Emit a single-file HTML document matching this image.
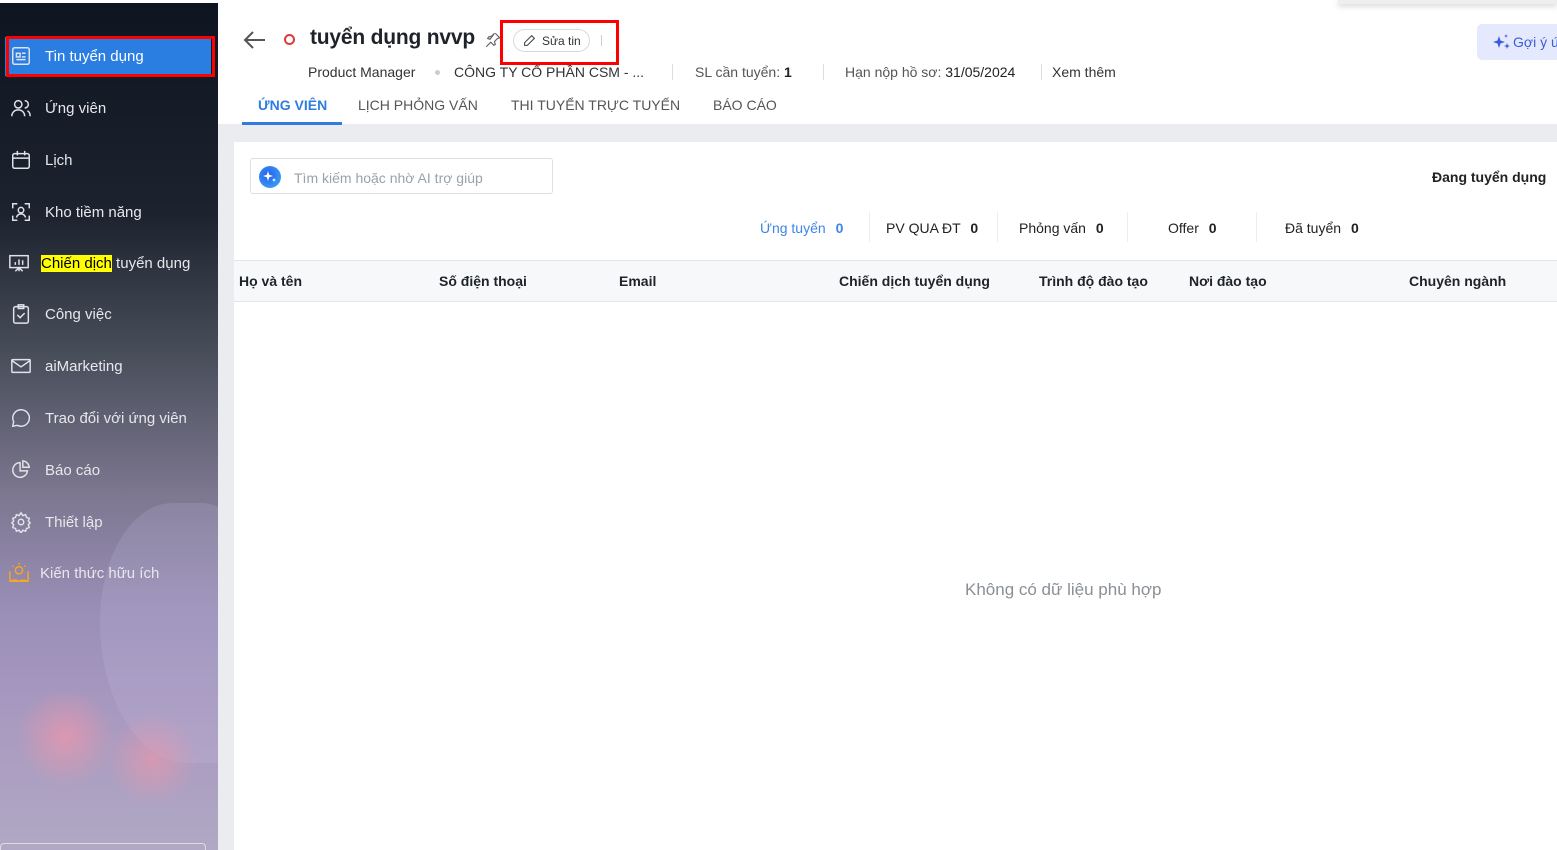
<!DOCTYPE html>
<html><head><meta charset="utf-8"><style>
*{margin:0;padding:0;box-sizing:border-box}
body{width:1557px;height:850px;overflow:hidden;font-family:"Liberation Sans",sans-serif;background:#fff;position:relative;color:#1f2329}
.sb{position:absolute;left:0;top:3px;width:218px;height:847px;background:linear-gradient(180deg,#0e1520 0%,#1c232e 25%,#4a4f5c 42%,#7d7790 58%,#9a8fb8 72%,#a99ac0 85%,#b0a8c4 100%);overflow:hidden}
.horse{position:absolute;left:100px;top:500px;width:160px;height:260px;border-radius:50% 40% 20% 60%;background:rgba(200,195,230,.18)}
.mi{position:absolute;left:10px;display:flex;align-items:center;font-size:15px;color:#e6e8ec;height:24px}
.mi svg{width:22px;height:22px;margin-right:13px;fill:none;stroke:#dfe3ea;stroke-width:1.6}
.act{position:absolute;left:5px;top:34px;width:206px;height:39px;background:#2a7de1}
.redbox{position:absolute;border:3px solid #f00}
.hdr{position:absolute;left:218px;top:0;right:0;height:124px;background:#fff}
.gray{position:absolute;left:218px;top:124px;right:0;height:726px;background:#ebecf0}
.panel{position:absolute;left:234px;top:142px;right:0;bottom:0;background:#fff}
.t{position:absolute;white-space:nowrap}
</style></head><body>
<div class="sb">
<div class="horse"></div>
<div style="position:absolute;left:0;top:690px;width:218px;height:110px;background:radial-gradient(circle at 30% 40%,rgba(240,150,170,.7) 0,rgba(240,150,170,0) 30%),radial-gradient(circle at 70% 60%,rgba(240,150,170,.6) 0,rgba(240,150,170,0) 28%)"></div>
<div class="act"></div>
<div class="mi" style="top:41px;color:#fff"><svg viewBox="0 0 24 24"><rect x="3" y="3" width="18" height="18" rx="2"/><rect x="7" y="9" width="4" height="4"/><path d="M13 9h4M13 13h4M7 16h10"/></svg>Tin tuyển dụng</div>
<div class="mi" style="top:93px"><svg viewBox="0 0 24 24"><circle cx="9" cy="8" r="4"/><path d="M2 21c0-4 3-7 7-7s7 3 7 7M16 4a4 4 0 010 8M19 15c2 1 3 3 3 6"/></svg>Ứng viên</div>
<div class="mi" style="top:145px"><svg viewBox="0 0 24 24"><rect x="3" y="5" width="18" height="16" rx="2"/><path d="M3 10h18M8 2v5M16 2v5"/></svg>Lịch</div>
<div class="mi" style="top:197px"><svg viewBox="0 0 24 24"><path d="M3 8V3h5M16 3h5v5M21 16v5h-5M8 21H3v-5"/><circle cx="12" cy="10" r="3"/><path d="M7 18c1-3 3-4 5-4s4 1 5 4"/></svg>Kho tiềm năng</div>
<div class="mi" style="top:248px;left:8px"><svg viewBox="0 0 24 24"><rect x="2" y="4" width="20" height="13"/><path d="M8 14v-3M12 14V8M16 14v-5M12 17v4M8 21l4-4 4 4"/></svg><span style="background:#ff0;color:#000;margin-left:-2px">Chiến dịch</span>&nbsp;tuyển dụng</div>
<div class="mi" style="top:299px"><svg viewBox="0 0 24 24"><rect x="4" y="4" width="16" height="18" rx="2"/><rect x="9" y="2" width="6" height="4"/><path d="M8 13l3 3 5-5"/></svg>Công việc</div>
<div class="mi" style="top:351px"><svg viewBox="0 0 24 24"><rect x="2" y="5" width="20" height="14" rx="1"/><path d="M2 6l10 7 10-7"/></svg>aiMarketing</div>
<div class="mi" style="top:403px"><svg viewBox="0 0 24 24"><path d="M12 3a9 9 0 00-8 13l-1 5 5-1a9 9 0 104-17z"/><path d="M8 12h.1M12 12h.1M16 12h.1"/></svg>Trao đổi với ứng viên</div>
<div class="mi" style="top:455px"><svg viewBox="0 0 24 24"><path d="M11 4a8 8 0 108 9h-8z"/><path d="M14 2a8 8 0 017 7h-7z"/></svg>Báo cáo</div>
<div class="mi" style="top:507px"><svg viewBox="0 0 24 24"><circle cx="12" cy="12" r="3"/><path d="M12 2l2 3 3-1 1 3 3 1-1 3 2 2-2 2 1 3-3 1-1 3-3-1-2 3-2-3-3 1-1-3-3-1 1-3-2-2 2-2-1-3 3-1 1-3 3 1z"/></svg>Thiết lập</div>
<div class="mi" style="top:558px;left:8px"><svg viewBox="0 0 24 24" style="stroke:#f5a623;margin-right:10px"><path d="M2 10v11h20V10M2 21c4-2 7-2 10 0 3-2 6-2 10 0"/><circle cx="12" cy="9" r="4"/><path d="M12 1v2M5 4l1 1M19 4l-1 1"/></svg>Kiến thức hữu ích</div>
<div style="position:absolute;left:0;top:840px;width:206px;height:10px;border:1px solid #ddd;border-radius:4px"></div>
</div>
<div class="redbox" style="left:6px;top:36px;width:209px;height:41px"></div>
<div class="hdr">
<div style="position:absolute;left:1120px;top:0;right:0;height:4px;box-shadow:0 2px 6px rgba(0,0,0,.2);background:#eee"></div>
</div>
<svg class="t" style="left:242px;top:29px" width="26" height="22" viewBox="0 0 26 22"><path d="M23 11H3M11 3l-8 8 8 8" fill="none" stroke="#555" stroke-width="2"/></svg>
<div class="t" style="left:284px;top:34px;width:11px;height:11px;border:2px solid #e03a3a;border-radius:50%"></div>
<div class="t" style="left:310px;top:26px;font-size:21px;font-weight:bold;color:#1f2329;letter-spacing:-0.2px">tuyển dụng nvvp</div>
<svg class="t" style="left:484px;top:31px" width="18" height="18" viewBox="0 0 24 24"><path d="M15 3l6 6-3 1-4 4 1 4-2 1-4-4-6 6M8 11l-3-1 1-2 4-1 4-4z" fill="none" stroke="#666" stroke-width="1.6"/></svg>
<div class="t" style="left:513px;top:29px;width:77px;height:23px;border:1px solid #d8dadf;border-radius:12px;font-size:12px;padding:4px 0 0 28px;color:#333">Sửa tin</div>
<svg class="t" style="left:523px;top:34px" width="13" height="13" viewBox="0 0 24 24"><path d="M16 3l5 5L8 21H3v-5z" fill="none" stroke="#444" stroke-width="2"/></svg>
<div class="t" style="left:601px;top:35px;width:1px;height:11px;background:#ccc"></div>
<div class="redbox" style="left:500px;top:20px;width:119px;height:45px"></div>
<div class="t" style="left:1477px;top:24px;width:90px;height:36px;background:#e5e9fd;border-radius:5px;color:#3b5bdb;font-size:14px;padding:10px 0 0 36px">Gợi ý ứ</div>
<svg class="t" style="left:1492px;top:33px" width="20" height="18" viewBox="0 0 20 18"><path d="M7 3l1.5 4.5L13 9l-4.5 1.5L7 15l-1.5-4.5L1 9l4.5-1.5z M15 10l.8 2.2 2.2.8-2.2.8L15 16l-.8-2.2L12 13l2.2-.8z M14 1l.5 1.5L16 3l-1.5.5L14 5l-.5-1.5L12 3l1.5-.5z" fill="#3b5bdb"/></svg>
<div class="t" style="left:308px;top:64px;font-size:14px;color:#333">Product Manager</div>
<div class="t" style="left:435px;top:70px;width:5px;height:5px;background:#ccc;border-radius:50%"></div>
<div class="t" style="left:454px;top:64px;font-size:14px;color:#333">CÔNG TY CỔ PHẦN CSM - ...</div>
<div class="t" style="left:672px;top:64px;width:1px;height:16px;background:#ddd"></div>
<div class="t" style="left:695px;top:64px;font-size:14px;color:#555">SL cần tuyển: <b style="color:#222">1</b></div>
<div class="t" style="left:823px;top:64px;width:1px;height:16px;background:#ddd"></div>
<div class="t" style="left:845px;top:64px;font-size:14px;color:#555">Hạn nộp hồ sơ: <span style="color:#222">31/05/2024</span></div>
<div class="t" style="left:1041px;top:64px;width:1px;height:16px;background:#ddd"></div>
<div class="t" style="left:1052px;top:64px;font-size:14px;color:#333">Xem thêm</div>
<div class="t" style="left:258px;top:97px;font-size:14px;color:#2f7de1;font-weight:bold">ỨNG VIÊN</div>
<div class="t" style="left:242px;top:122px;width:100px;height:3px;background:#2f7de1;z-index:2"></div>
<div class="t" style="left:358px;top:97px;font-size:14px;color:#555">LỊCH PHỎNG VẤN</div>
<div class="t" style="left:511px;top:97px;font-size:14px;color:#555">THI TUYỂN TRỰC TUYẾN</div>
<div class="t" style="left:713px;top:97px;font-size:14px;color:#555">BÁO CÁO</div>
<div class="gray"></div>
<div class="panel">
<div class="t" style="left:16px;top:16px;width:303px;height:36px;border:1px solid #dcdfe4;border-radius:3px"></div>
<div class="t" style="left:25px;top:24px;width:22px;height:22px;border-radius:50%;background:radial-gradient(circle at 40% 40%,#2b5cf0,#38b3f5)"></div>
<svg class="t" style="left:28px;top:27px" width="16" height="16" viewBox="0 0 16 16"><path d="M6 2l1.2 3.8L11 7 7.2 8.2 6 12 4.8 8.2 1 7l3.8-1.2z M12 9l.6 1.4L14 11l-1.4.6L12 13l-.6-1.4L10 11l1.4-.6z" fill="#fff"/></svg>
<div class="t" style="left:60px;top:28px;font-size:14px;color:#9aa1ab">Tìm kiếm hoặc nhờ AI trợ giúp</div>
<div class="t" style="left:1198px;top:27px;font-size:14px;font-weight:bold;color:#222">Đang tuyển dụng</div>
<div class="t" style="left:526px;top:78px;font-size:14px;color:#3d85e8">Ứng tuyển <b style="margin-left:6px">0</b></div>
<div class="t" style="left:635px;top:70px;width:1px;height:30px;background:#eee"></div>
<div class="t" style="left:652px;top:78px;font-size:14px;color:#222">PV QUA ĐT <b style="margin-left:6px">0</b></div>
<div class="t" style="left:763px;top:70px;width:1px;height:30px;background:#eee"></div>
<div class="t" style="left:785px;top:78px;font-size:14px;color:#222">Phỏng vấn <b style="margin-left:6px">0</b></div>
<div class="t" style="left:893px;top:70px;width:1px;height:30px;background:#eee"></div>
<div class="t" style="left:934px;top:78px;font-size:14px;color:#222">Offer <b style="margin-left:6px">0</b></div>
<div class="t" style="left:1022px;top:70px;width:1px;height:30px;background:#eee"></div>
<div class="t" style="left:1051px;top:78px;font-size:14px;color:#222">Đã tuyển <b style="margin-left:6px">0</b></div>
<div class="t" style="left:0;top:118px;right:0;height:42px;background:#f7f8fa;border-top:1px solid #e3e5e8;border-bottom:1px solid #e3e5e8"></div>
<div class="t" style="left:5px;top:131px;font-size:14px;font-weight:bold">Họ và tên</div>
<div class="t" style="left:205px;top:131px;font-size:14px;font-weight:bold">Số điện thoại</div>
<div class="t" style="left:385px;top:131px;font-size:14px;font-weight:bold">Email</div>
<div class="t" style="left:605px;top:131px;font-size:14px;font-weight:bold">Chiến dịch tuyển dụng</div>
<div class="t" style="left:805px;top:131px;font-size:14px;font-weight:bold">Trình độ đào tạo</div>
<div class="t" style="left:955px;top:131px;font-size:14px;font-weight:bold">Nơi đào tạo</div>
<div class="t" style="left:1175px;top:131px;font-size:14px;font-weight:bold">Chuyên ngành</div>
<div class="t" style="left:731px;top:438px;font-size:17px;color:#8a8f96">Không có dữ liệu phù hợp</div>
</div>
</body></html>
